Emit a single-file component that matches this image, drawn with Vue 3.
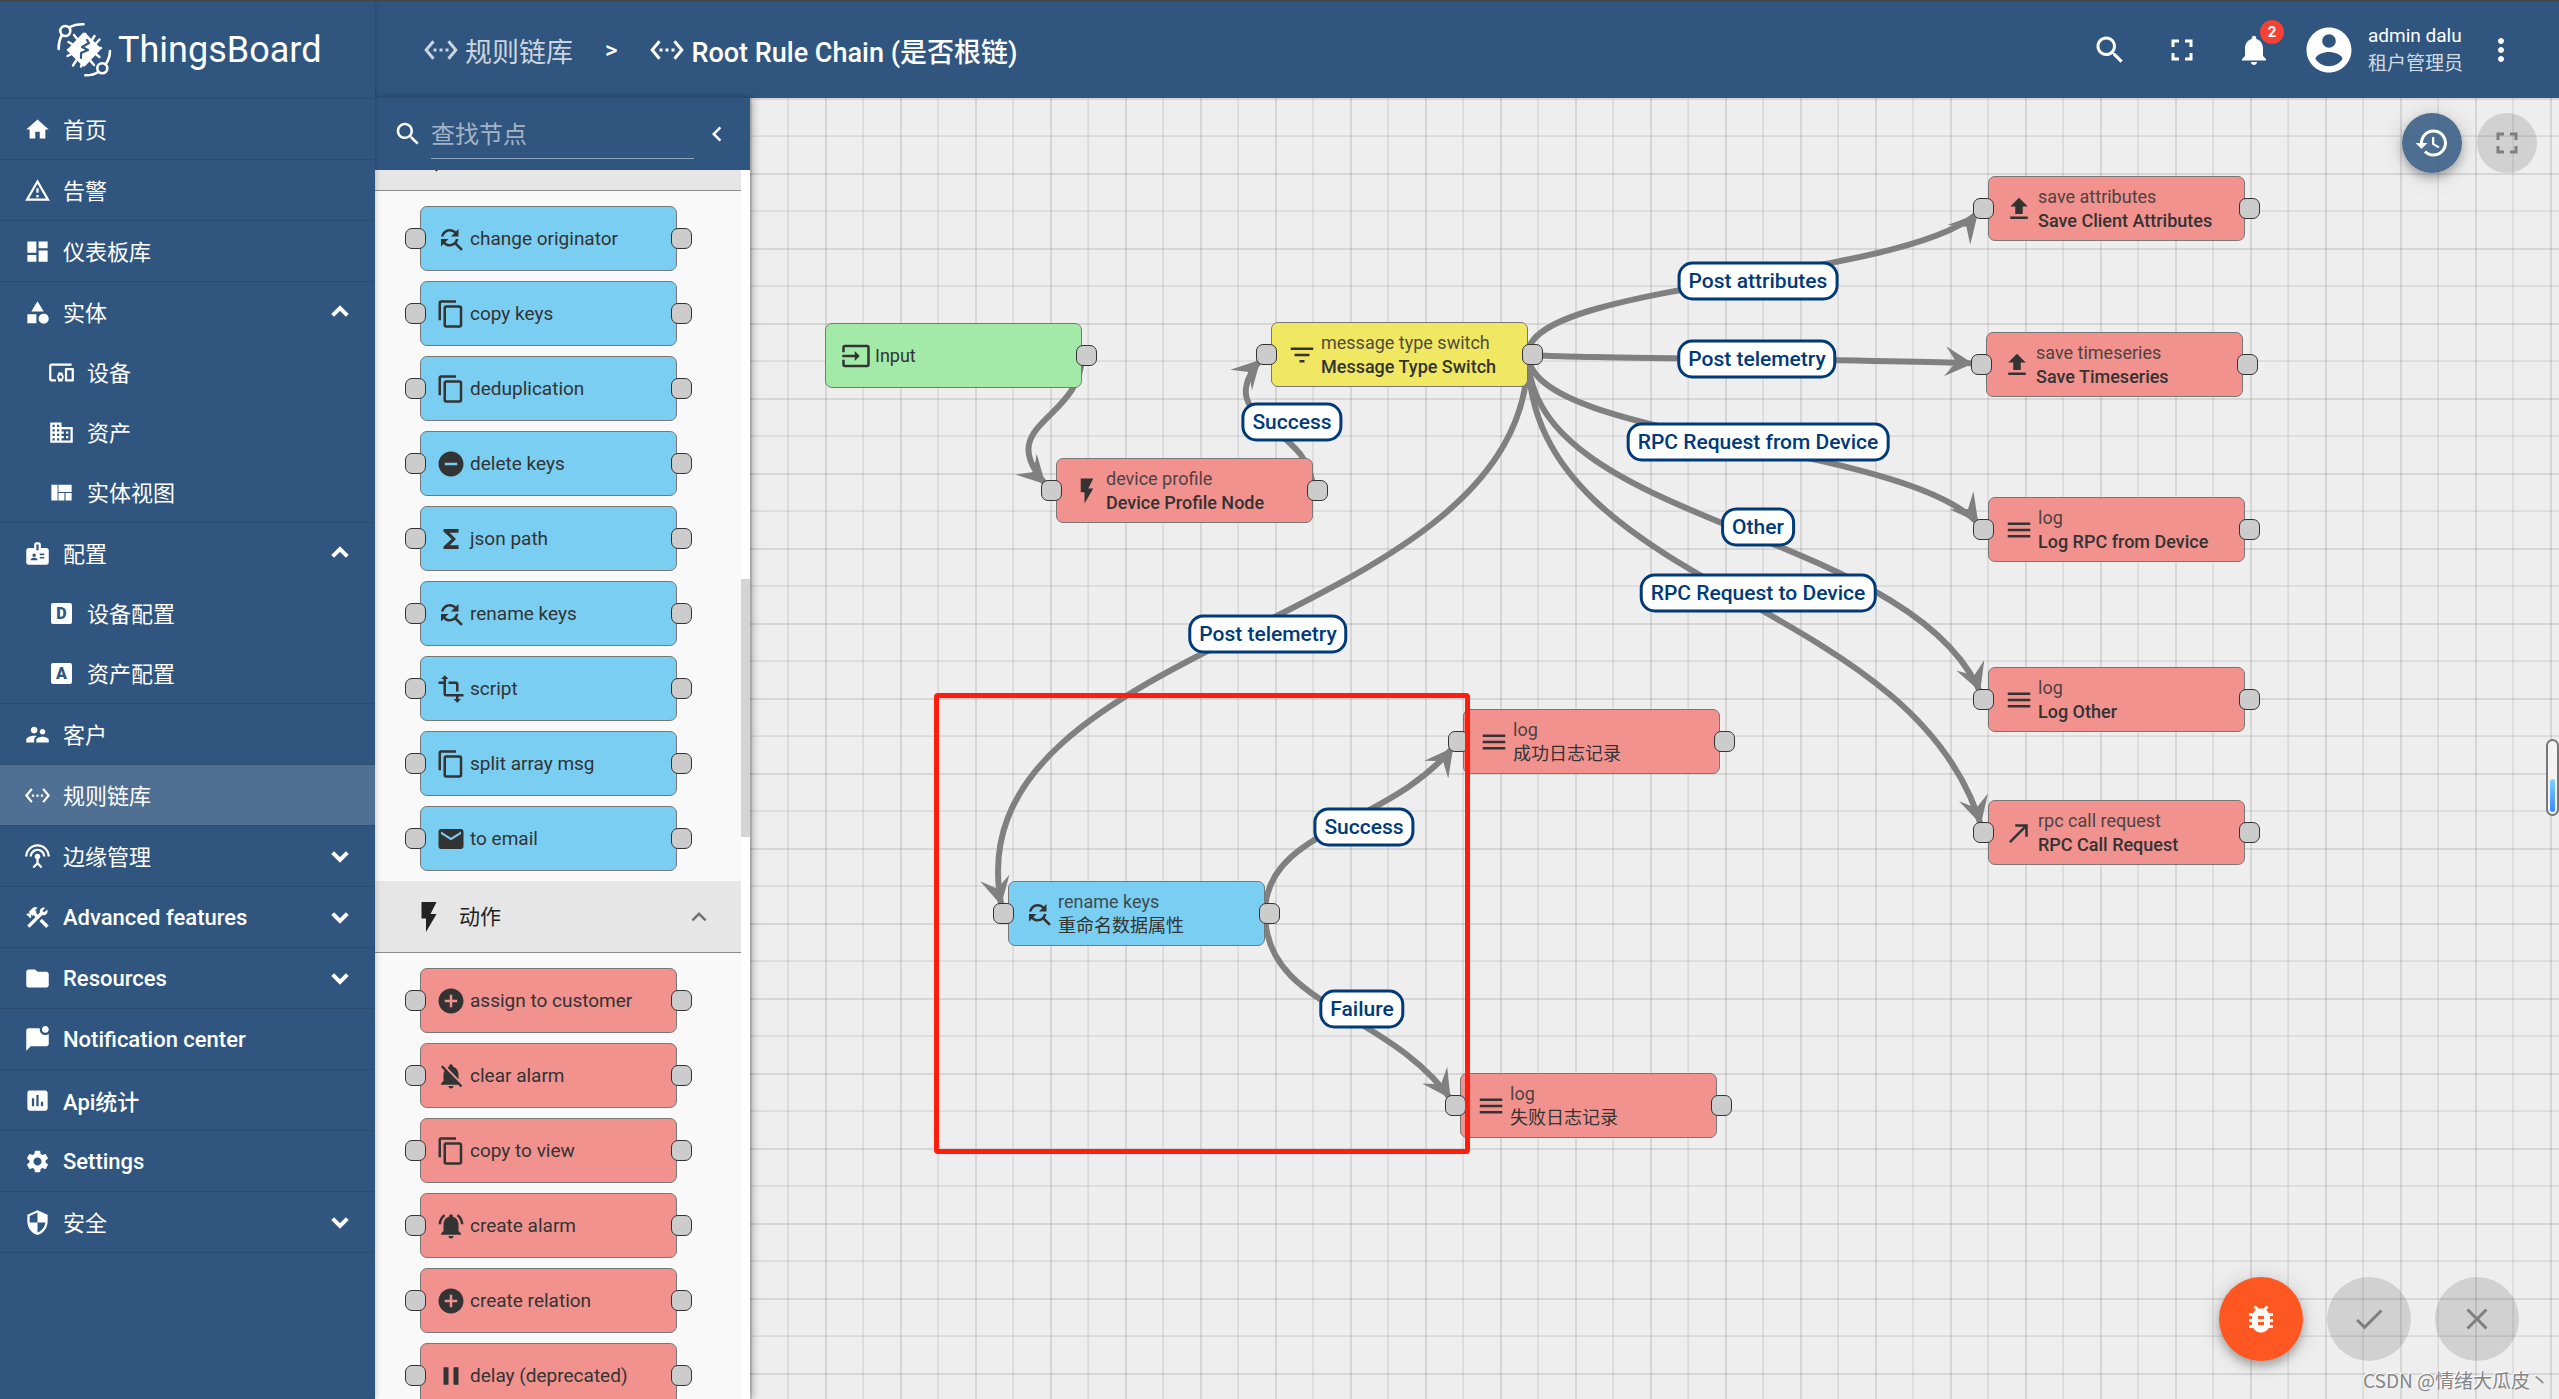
<script setup>
const icons = {
  home: 'M10 20v-6h4v6h5v-8h3L12 3 2 12h3v8z',
  warning: 'M12 5.99L19.53 19H4.47L12 5.99M12 2L1 21h22L12 2zm1 14h-2v2h2v-2zm0-6h-2v4h2v-4z',
  dashboard: 'M3 13h8V3H3v10zm0 8h8v-6H3v6zm10 0h8V11h-8v10zm0-18v6h8V3h-8z',
  category: 'M12 2l-5.5 9h11zM17.5 13a4.5 4.5 0 100 9 4.5 4.5 0 000-9zM3 13.5h8v8H3z',
  devices: 'M3 6h18V4H3c-1.1 0-2 .9-2 2v12c0 1.1.9 2 2 2h4v-2H3V6zm10 6H9v1.78c-.61.55-1 1.33-1 2.22s.39 1.67 1 2.22V20h4v-1.78c.61-.55 1-1.34 1-2.22s-.39-1.67-1-2.22V12zm-2 5.5c-.83 0-1.5-.67-1.5-1.5s.67-1.5 1.5-1.5 1.5.67 1.5 1.5-.67 1.5-1.5 1.5zM22 8h-6c-.5 0-1 .5-1 1v10c0 .5.5 1 1 1h6c.5 0 1-.5 1-1V9c0-.5-.5-1-1-1zm-1 10h-4v-8h4v8z',
  domain: 'M12 7V3H2v18h20V7H12zM6 19H4v-2h2v2zm0-4H4v-2h2v2zm0-4H4V9h2v2zm0-4H4V5h2v2zm4 12H8v-2h2v2zm0-4H8v-2h2v2zm0-4H8V9h2v2zm0-4H8V5h2v2zm10 12h-8v-2h2v-2h-2v-2h2v-2h-2V9h8v10zm-2-8h-2v2h2v-2zm0 4h-2v2h2v-2z',
  quilt: 'M3 5h5.5v14H3zM9.3 5H21v6.5H9.3zM9.3 12.4h5.3V19H9.3zM15.6 12.4H21V19h-5.4z',
  badge: 'M20 7h-5V4c0-1.1-.9-2-2-2h-2c-1.1 0-2 .9-2 2v3H4c-1.1 0-2 .9-2 2v11c0 1.1.9 2 2 2h16c1.1 0 2-.9 2-2V9c0-1.1-.9-2-2-2zM9 12c.83 0 1.5.67 1.5 1.5S9.83 15 9 15s-1.5-.67-1.5-1.5S8.17 12 9 12zm3 6H6v-.75c0-1 2-1.5 3-1.5s3 .5 3 1.5V18zm1-9h-2V4h2v5zm5 7.5h-4V15h4v1.5zm0-3h-4V12h4v1.5z',
  people: 'M16.5 12c1.38 0 2.49-1.12 2.49-2.5S17.88 7 16.5 7C15.12 7 14 8.12 14 9.5s1.12 2.5 2.5 2.5zM9 11c1.66 0 2.99-1.34 2.99-3S10.66 5 9 5C7.34 5 6 6.34 6 8s1.34 3 3 3zm7.5 3c-1.83 0-5.5.92-5.5 2.75V19h11v-2.25c0-1.83-3.67-2.75-5.5-2.75zM9 13c-2.33 0-7 1.17-7 3.5V19h7v-2.25c0-.85.33-2.34 2.37-3.47C10.5 13.1 9.66 13 9 13z',
  chain: 'M7.77 6.76L6.23 5.48.82 12l5.41 6.52 1.54-1.28L3.42 12l4.35-5.24zM7 13h2v-2H7v2zm10-2h-2v2h2v-2zm-6 2h2v-2h-2v2zm6.77-7.52l-1.54 1.28L20.58 12l-4.35 5.24 1.54 1.28L23.18 12l-5.41-6.52z',
  antenna: 'M12 5c-3.87 0-7 3.13-7 7h2c0-2.76 2.24-5 5-5s5 2.24 5 5h2c0-3.87-3.13-7-7-7zm1 9.29c.88-.39 1.5-1.26 1.5-2.29 0-1.38-1.12-2.5-2.5-2.5S9.5 10.62 9.5 12c0 1.02.62 1.9 1.5 2.29v3.3L7.59 21 9 22.41l3-3 3 3L16.41 21 13 17.59v-3.3zM12 1C5.93 1 1 5.93 1 12h2c0-4.97 4.03-9 9-9s9 4.03 9 9h2c0-6.07-4.93-11-11-11z',
  tools: 'M13.78 15.3l6 6 2.11-2.16-6-6-2.11 2.16zM17.5 10c1.93 0 3.5-1.57 3.5-3.5 0-.58-.16-1.12-.41-1.6l-2.7 2.7-1.49-1.49 2.7-2.7c-.48-.25-1.02-.41-1.6-.41C15.57 3 14 4.57 14 6.5c0 .41.08.8.21 1.16l-1.85 1.85-1.78-1.78.71-.71-1.41-1.41L12 3.49c-1.17-1.17-3.07-1.17-4.24 0L4.22 7.03l1.41 1.41H2.81l-.71.71 3.54 3.54.71-.71V9.15l1.41 1.41.71-.71 1.78 1.78-7.41 7.41 2.12 2.12L16.34 9.79c.36.13.75.21 1.16.21z',
  folder: 'M10 4H4c-1.1 0-1.99.9-1.99 2L2 18c0 1.1.9 2 2 2h16c1.1 0 2-.9 2-2V8c0-1.1-.9-2-2-2h-8l-2-2z',
  message: 'M22 7V16C22 17.1 21.1 18 20 18H6L2 22V4C2 2.9 2.9 2 4 2H14.1C14 2.3 14 2.7 14 3C14 5.8 16.2 8 19 8C20.1 8 21.2 7.6 22 7M16 3C16 4.7 17.3 6 19 6S22 4.7 22 3 20.7 0 19 0 16 1.3 16 3Z',
  chart: 'M19 3H5c-1.1 0-2 .9-2 2v14c0 1.1.9 2 2 2h14c1.1 0 2-.9 2-2V5c0-1.1-.9-2-2-2zM9 17H7v-7h2v7zm4 0h-2V7h2v10zm4 0h-2v-4h2v4z',
  settings: 'M19.14 12.94c.04-.3.06-.61.06-.94 0-.32-.02-.64-.07-.94l2.03-1.58c.18-.14.23-.41.12-.61l-1.92-3.32c-.12-.22-.37-.29-.59-.22l-2.39.96c-.5-.38-1.03-.7-1.62-.94l-.36-2.54c-.04-.24-.24-.41-.48-.41h-3.84c-.24 0-.43.17-.47.41l-.36 2.54c-.59.24-1.13.57-1.62.94l-2.39-.96c-.22-.08-.47 0-.59.22L2.74 8.87c-.12.21-.08.47.12.61l2.03 1.58c-.05.3-.09.63-.09.94s.02.64.07.94l-2.03 1.58c-.18.14-.23.41-.12.61l1.92 3.32c.12.22.37.29.59.22l2.39-.96c.5.38 1.03.7 1.62.94l.36 2.54c.05.24.24.41.48.41h3.84c.24 0 .44-.17.47-.41l.36-2.54c.59-.24 1.13-.56 1.62-.94l2.39.96c.22.08.47 0 .59-.22l1.92-3.32c.12-.22.07-.47-.12-.61l-2.01-1.58zM12 15.6c-1.98 0-3.6-1.62-3.6-3.6s1.62-3.6 3.6-3.6 3.6 1.62 3.6 3.6-1.62 3.6-3.6 3.6z',
  security: 'M12 1L3 5v6c0 5.55 3.84 10.74 9 12 5.16-1.26 9-6.45 9-12V5l-9-4zm0 10.99h7c-.53 4.12-3.28 7.79-7 8.94V12H5V6.3l7-3.11v8.8z',
  replace: 'M11 6c1.38 0 2.63.56 3.54 1.46L12 10h6V4l-2.05 2.05C14.68 4.78 12.93 4 11 4c-3.53 0-6.43 2.61-6.92 6H6.1c.46-2.28 2.48-4 4.9-4zm5.64 9.14c.66-.9 1.12-1.97 1.28-3.14H15.9c-.46 2.28-2.48 4-4.9 4-1.38 0-2.63-.56-3.54-1.46L10 12H4v6l2.05-2.05C7.32 17.22 9.07 18 11 18c1.55 0 2.98-.51 4.14-1.36L20 21.49 21.49 20l-4.85-4.86z',
  copy: 'M16 1H4c-1.1 0-2 .9-2 2v14h2V3h12V1zm3 4H8c-1.1 0-2 .9-2 2v14c0 1.1.9 2 2 2h11c1.1 0 2-.9 2-2V7c0-1.1-.9-2-2-2zm0 16H8V7h11v14z',
  remove: 'M12 2C6.48 2 2 6.48 2 12s4.48 10 10 10 10-4.48 10-10S17.52 2 12 2zm5 11H7v-2h10v2z',
  sigma: 'M18 4H6v2l6.5 6L6 18v2h12v-3h-7l5-5-5-5h7z',
  transform: 'M22 18v-2H8V4h2L7 1 4 4h2v2H2v2h4v8c0 1.1.9 2 2 2h8v2h-2l3 3 3-3h-2v-2h4zM10 8h6v6h2V8c0-1.1-.9-2-2-2h-6v2z',
  email: 'M20 4H4c-1.1 0-1.99.9-1.99 2L2 18c0 1.1.9 2 2 2h16c1.1 0 2-.9 2-2V6c0-1.1-.9-2-2-2zm0 4l-8 5-8-5V6l8 5 8-5v2z',
  flash: 'M7 2v11h3v9l7-12h-4l4-8z',
  add: 'M12 2C6.48 2 2 6.48 2 12s4.48 10 10 10 10-4.48 10-10S17.52 2 12 2zm5 11h-4v4h-2v-4H7v-2h4V7h2v4h4v2z',
  bellOff: 'M20 18.69L7.84 6.14 5.27 3.49 4 4.76l2.8 2.8v.01c-.52.99-.8 2.16-.8 3.42v5l-2 2v1h13.73l2 2L21 19.72l-1-1.03zM12 22c1.11 0 2-.89 2-2h-4c0 1.11.89 2 2 2zm6-7.32V11c0-3.08-1.64-5.64-4.5-6.32V4c0-.83-.67-1.5-1.5-1.5s-1.5.67-1.5 1.5v.68c-.15.03-.29.08-.42.12-.1.03-.2.07-.3.11h-.01c-.01 0-.01 0-.02.01-.23.09-.46.2-.68.31 0 0-.01 0-.01.01L18 14.68z',
  bellActive: 'M7.58 4.08L6.15 2.65C3.75 4.48 2.17 7.3 2.03 10.5h2c.15-2.65 1.51-4.97 3.55-6.42zm12.39 6.42h2c-.15-3.2-1.73-6.02-4.12-7.85l-1.42 1.43c2.02 1.45 3.39 3.77 3.54 6.42zM18 11c0-3.07-1.64-5.64-4.5-6.32V4c0-.83-.67-1.5-1.5-1.5s-1.5.67-1.5 1.5v.68C7.63 5.36 6 7.92 6 11v5l-2 2v1h16v-1l-2-2v-5zm-6 11c.14 0 .27-.01.4-.04.65-.14 1.18-.58 1.44-1.18.1-.24.15-.5.15-.78h-4c.01 1.1.9 2 2.01 2z',
  pause: 'M6 19h4V5H6v14zm8-14v14h4V5h-4z',
  input: 'M21 3.01H3c-1.1 0-2 .9-2 2V9h2V4.99h18v14.03H3V15H1v4.01c0 1.1.9 1.98 2 1.98h18c1.1 0 2-.88 2-1.98v-14c0-1.11-.9-2-2-2zM11 16l4-4-4-4v3H1v2h10v3z',
  filter: 'M10 18h4v-2h-4v2zM3 6v2h18V6H3zm3 7h12v-2H6v2z',
  upload: 'M9 16h6v-6h4l-7-7-7 7h4zm-4 2h14v2H5z',
  menu: 'M3 18h18v-2H3v2zm0-5h18v-2H3v2zm0-7v2h18V6H3z',
  callMade: 'M9 5v2h6.59L4 18.59 5.41 20 17 8.41V15h2V5z',
  search: 'M15.5 14h-.79l-.28-.27C15.41 12.59 16 11.11 16 9.5 16 5.91 13.09 3 9.5 3S3 5.91 3 9.5 5.91 16 9.5 16c1.61 0 3.09-.59 4.23-1.57l.27.28v.79l5 4.99L20.49 19l-4.99-5zm-6 0C7.01 14 5 11.99 5 9.5S7.01 5 9.5 5 14 7.01 14 9.5 11.99 14 9.5 14z',
  fullscreen: 'M7 14H5v5h5v-2H7v-3zm-2-4h2V7h3V5H5v5zm12 7h-3v2h5v-5h-2v3zM14 5v2h3v3h2V5h-5z',
  bell: 'M12 22c1.1 0 2-.9 2-2h-4c0 1.1.89 2 2 2zm6-6v-5c0-3.07-1.64-5.64-4.5-6.32V4c0-.83-.67-1.5-1.5-1.5s-1.5.67-1.5 1.5v.68C7.63 5.36 6 7.92 6 11v5l-2 2v1h16v-1l-2-2z',
  account: 'M12 2C6.48 2 2 6.48 2 12s4.48 10 10 10 10-4.48 10-10S17.52 2 12 2zm0 3c1.66 0 3 1.34 3 3s-1.34 3-3 3-3-1.34-3-3 1.34-3 3-3zm0 14.2c-2.5 0-4.71-1.28-6-3.22.03-1.99 4-3.08 6-3.08 1.99 0 5.97 1.09 6 3.08-1.29 1.94-3.5 3.22-6 3.22z',
  more: 'M12 8c1.1 0 2-.9 2-2s-.9-2-2-2-2 .9-2 2 .9 2 2 2zm0 2c-1.1 0-2 .9-2 2s.9 2 2 2 2-.9 2-2-.9-2-2-2zm0 6c-1.1 0-2 .9-2 2s.9 2 2 2 2-.9 2-2-.9-2-2-2z',
  history: 'M13 3c-4.97 0-9 4.03-9 9H1l3.89 3.89.07.14L9 12H6c0-3.87 3.13-7 7-7s7 3.13 7 7-3.13 7-7 7c-1.93 0-3.68-.79-4.94-2.06l-1.42 1.42C8.27 19.99 10.51 21 13 21c4.97 0 9-4.03 9-9s-4.03-9-9-9zm-1 5v5l4.28 2.54.72-1.21-3.5-2.08V8H12z',
  bug: 'M20 8h-2.81c-.45-.78-1.07-1.45-1.82-1.96L17 4.41 15.59 3l-2.17 2.17C12.96 5.06 12.49 5 12 5c-.49 0-.96.06-1.41.17L8.41 3 7 4.41l1.62 1.63C7.88 6.55 7.26 7.22 6.81 8H4v2h2.09c-.05.33-.09.66-.09 1v1H4v2h2v1c0 .34.04.67.09 1H4v2h2.81c1.04 1.79 2.97 3 5.19 3s4.15-1.21 5.19-3H20v-2h-2.09c.05-.33.09-.66.09-1v-1h2v-2h-2v-1c0-.34-.04-.67-.09-1H20V8zm-6 8h-4v-2h4v2zm0-4h-4v-2h4v2z',
  done: 'M9 16.2L4.8 12l-1.4 1.4L9 19 21 7l-1.4-1.4L9 16.2z',
  close: 'M19 6.41L17.59 5 12 10.59 6.41 5 5 6.41 10.59 12 5 17.59 6.41 19 12 13.41 17.59 19 19 17.59 13.41 12z',
  up: 'M12 8l-6 6 1.41 1.41L12 10.83l4.59 4.58L18 14z',
  left: 'M15.41 7.41L14 6l-6 6 6 6 1.41-1.41L10.83 12z',
}

const menu = [
  { label: '首页', icon: 'home' },
  { label: '告警', icon: 'warning' },
  { label: '仪表板库', icon: 'dashboard' },
  {
    label: '实体', icon: 'category', open: true,
    children: [
      { label: '设备', icon: 'devices' },
      { label: '资产', icon: 'domain' },
      { label: '实体视图', icon: 'quilt' },
    ],
  },
  {
    label: '配置', icon: 'badge', open: true,
    children: [
      { label: '设备配置', letter: 'D' },
      { label: '资产配置', letter: 'A' },
    ],
  },
  { label: '客户', icon: 'people' },
  { label: '规则链库', icon: 'chain', active: true },
  { label: '边缘管理', icon: 'antenna', open: false },
  { label: 'Advanced features', icon: 'tools', open: false },
  { label: 'Resources', icon: 'folder', open: false },
  { label: 'Notification center', icon: 'message' },
  { label: 'Api统计', icon: 'chart' },
  { label: 'Settings', icon: 'settings' },
  { label: '安全', icon: 'security', open: false },
]

// Chinese labels are set in the regular weight, Latin ones in medium.
const isChinese = (text) => /^[\u4e00-\u9fff]/.test(text)

const library = [
  {
    icon: 'transform', kind: 'blue',
    items: [
      ['change originator', 'replace'], ['copy keys', 'copy'], ['deduplication', 'copy'],
      ['delete keys', 'remove'], ['json path', 'sigma'], ['rename keys', 'replace'],
      ['script', 'transform'], ['split array msg', 'copy'], ['to email', 'email'],
    ],
  },
  {
    title: '动作', icon: 'flash', kind: 'red',
    items: [
      ['assign to customer', 'add'], ['clear alarm', 'bellOff'], ['copy to view', 'copy'],
      ['create alarm', 'bellActive'], ['create relation', 'add'], ['delay (deprecated)', 'pause'],
    ],
  },
]

// Node positions are canvas coordinates of the top left corner.
const nodes = {
  input: { x: 75, y: 225, kind: 'green', icon: 'input', name: 'Input', source: true },
  profile: { x: 306, y: 360, kind: 'red', icon: 'flash', type: 'device profile', name: 'Device Profile Node' },
  switch: { x: 521, y: 224, kind: 'yellow', icon: 'filter', type: 'message type switch', name: 'Message Type Switch' },
  attributes: { x: 1238, y: 78, kind: 'red', icon: 'upload', type: 'save attributes', name: 'Save Client Attributes' },
  timeseries: { x: 1236, y: 234, kind: 'red', icon: 'upload', type: 'save timeseries', name: 'Save Timeseries' },
  logRpc: { x: 1238, y: 399, kind: 'red', icon: 'menu', type: 'log', name: 'Log RPC from Device' },
  logOther: { x: 1238, y: 569, kind: 'red', icon: 'menu', type: 'log', name: 'Log Other' },
  rpcCall: { x: 1238, y: 702, kind: 'red', icon: 'callMade', type: 'rpc call request', name: 'RPC Call Request' },
  logOk: { x: 713, y: 611, kind: 'red', icon: 'menu', type: 'log', name: '成功日志记录' },
  rename: { x: 258, y: 783, kind: 'blue', icon: 'replace', type: 'rename keys', name: '重命名数据属性' },
  logFail: { x: 710, y: 975, kind: 'red', icon: 'menu', type: 'log', name: '失败日志记录' },
}

const links = [
  ['input', 'profile', ''],
  ['profile', 'switch', 'Success'],
  ['switch', 'attributes', 'Post attributes'],
  ['switch', 'timeseries', 'Post telemetry'],
  ['switch', 'logRpc', 'RPC Request from Device'],
  ['switch', 'logOther', 'Other'],
  ['switch', 'rpcCall', 'RPC Request to Device'],
  ['switch', 'rename', 'Post telemetry'],
  ['rename', 'logOk', 'Success'],
  ['rename', 'logFail', 'Failure'],
]

const edges = links.map(([from, to, label]) => {
  const sx = nodes[from].x + 257
  const sy = nodes[from].y + 32
  const dx = nodes[to].x - 5
  const dy = nodes[to].y + 32
  const x = Math.round((sx + dx) / 2) + 2
  const y = Math.round((sy + dy) / 2)
  return { d: `M${sx} ${sy}C${sx} ${y} ${dx - 65} ${y} ${dx} ${dy}`, label, x, y }
})
</script>

<template>
  <div class="app">
    <aside class="sidebar">
      <a class="brand" href="#">
        <svg class="brand-mark" viewBox="0 0 70 70" fill="none" stroke="#fff" stroke-width="2.6" stroke-linecap="round">
          <circle cx="15.3" cy="16" r="5" />
          <path d="M19 12.500Q25 9.200 33.500 9.300M12 20Q8.500 26 8.700 34" />
          <circle cx="52.300" cy="53.300" r="5" />
          <path d="M55.500 49.500Q60 43 60 36M48.500 57Q43 60.500 35.300 60.300" />
          <path d="M24 20l4 5M18.500 27l5 3M34 23l1.500-4M42 25l2.500-4M45 29.500l4.500-5M17.500 41l5-2.500M23 50.500l3.500-5.500M31 51.500l1.500-4.500M39 44l5 6M44.500 38l5 4M47 33l4 0M18 35l3-1" stroke-width="2.400" />
          <path d="M34 19.500L48.500 34 34 49.500 19.500 35z" fill="#fff" stroke-width="4" stroke-linejoin="round" />
          <path d="M37 25l2 3-7 4 6 3-7 3v5" stroke="#305680" stroke-width="2.200" stroke-linejoin="round" />
        </svg>
        <span>ThingsBoard</span>
      </a>
      <nav>
        <div v-for="item in menu" :key="item.label" class="group">
          <component
            :is="item.open === undefined ? 'a' : 'button'"
            :href="item.open === undefined ? '#' : null"
            class="item"
            :class="{ active: item.active }"
          >
            <svg class="i27" viewBox="0 0 24 24"><path :d="icons[item.icon]" /></svg>
            <span :class="{ cjk: isChinese(item.label) }">{{ item.label }}</span>
            <svg v-if="item.open !== undefined" class="toggle" :class="{ down: !item.open }" viewBox="0 0 24 24">
              <path d="M6.500 14.500L12 9l5.500 5.500" fill="none" stroke="currentColor" stroke-width="3" />
            </svg>
          </component>
          <a v-for="sub in item.children" :key="sub.label" href="#" class="item sub">
            <span v-if="sub.letter" class="letter-cell"><span class="letter">{{ sub.letter }}</span></span>
            <svg v-else class="i27" viewBox="0 0 24 24"><path :d="icons[sub.icon]" /></svg>
            <span class="cjk">{{ sub.label }}</span>
          </a>
        </div>
      </nav>
    </aside>

    <div class="main">
      <header class="topbar">
        <div class="crumbs">
          <a href="#" class="crumb faded">
            <svg class="i36" viewBox="0 0 24 24"><path :d="icons.chain" /></svg>
            <span>规则链库</span>
          </a>
          <span class="sep">&gt;</span>
          <span class="crumb current">
            <svg class="i36" viewBox="0 0 24 24"><path :d="icons.chain" /></svg>
            <span>Root Rule Chain (是否根链)</span>
          </span>
        </div>
        <div class="actions">
          <button class="tool" aria-label="Search"><svg class="i36" viewBox="0 0 24 24"><path :d="icons.search" /></svg></button>
          <button class="tool" aria-label="Fullscreen"><svg class="i36" viewBox="0 0 24 24"><path :d="icons.fullscreen" /></svg></button>
          <button class="tool" aria-label="Notifications">
            <svg class="i36" viewBox="0 0 24 24"><path :d="icons.bell" /></svg>
            <span class="count">2</span>
          </button>
          <svg class="avatar" viewBox="0 0 24 24"><path :d="icons.account" /></svg>
          <div class="user">
            <span>admin dalu</span>
            <span class="role">租户管理员</span>
          </div>
          <button class="tool" aria-label="More"><svg class="i36" viewBox="0 0 24 24"><path :d="icons.more" /></svg></button>
        </div>
      </header>

      <div class="workspace">
        <section class="library">
          <div class="finder">
            <svg class="i30" viewBox="0 0 24 24"><path :d="icons.search" /></svg>
            <input type="text" placeholder="查找节点" aria-label="查找节点" />
            <button class="collapse" aria-label="Collapse"><svg class="i30" viewBox="0 0 24 24"><path :d="icons.left" /></svg></button>
          </div>
          <div class="library-body">
            <div class="library-list">
              <div v-for="group in library" :key="group.kind">
                <button class="group-head">
                  <svg class="i36" viewBox="0 0 24 24"><path :d="icons[group.icon]" /></svg>
                  <span v-if="group.title" class="cjk">{{ group.title }}</span>
                  <svg class="fold" viewBox="0 0 24 24"><path :d="icons.up" /></svg>
                </button>
                <div class="group-body">
                  <div v-for="[name, icon] in group.items" :key="name" class="node" :class="group.kind">
                    <i class="port in"></i>
                    <svg class="i30" viewBox="0 0 24 24"><path :d="icons[icon]" /></svg>
                    <span>{{ name }}</span>
                    <i class="port out"></i>
                  </div>
                </div>
              </div>
            </div>
            <div class="scrollbar"></div>
          </div>
        </section>

        <section class="canvas">
          <svg class="edges">
            <defs>
              <marker id="arrow" viewBox="0 0 28 30" refX="36" refY="15" markerWidth="28" markerHeight="30" markerUnits="userSpaceOnUse" orient="auto">
                <path d="M0 0L28 15 0 30 11 15z" fill="#808080" />
              </marker>
            </defs>
            <path v-for="(edge, i) in edges" :key="i" :d="edge.d" fill="none" stroke="#808080" stroke-width="6" marker-end="url(#arrow)" />
          </svg>
          <div
            v-for="(node, key) in nodes"
            :key="key"
            class="node placed"
            :class="node.kind"
            :style="{ left: node.x + 'px', top: node.y + 'px' }"
          >
            <i v-if="!node.source" class="port in"></i>
            <svg class="i30" viewBox="0 0 24 24"><path :d="icons[node.icon]" /></svg>
            <div class="texts">
              <span v-if="node.type" class="type">{{ node.type }}</span>
              <span :class="{ name: node.type && !isChinese(node.name) }">{{ node.name }}</span>
            </div>
            <i class="port out"></i>
          </div>
          <template v-for="(edge, i) in edges" :key="i">
            <span v-if="edge.label" class="edge-label" :style="{ left: edge.x + 'px', top: edge.y + 'px' }">{{ edge.label }}</span>
          </template>
          <div class="highlight"></div>

          <div class="float-top">
            <button class="round history" aria-label="History"><svg class="i36" viewBox="0 0 24 24"><path :d="icons.history" /></svg></button>
            <button class="round muted" aria-label="Expand"><svg class="i36" viewBox="0 0 24 24"><path :d="icons.fullscreen" /></svg></button>
          </div>
          <div class="float-bottom">
            <button class="fab debug" aria-label="Debug"><svg class="i36" viewBox="0 0 24 24"><path :d="icons.bug" /></svg></button>
            <button class="fab muted" aria-label="Apply"><svg class="i36" viewBox="0 0 24 24"><path :d="icons.done" /></svg></button>
            <button class="fab muted" aria-label="Cancel"><svg class="i36" viewBox="0 0 24 24"><path :d="icons.close" /></svg></button>
          </div>
          <div class="gauge"><div class="level"></div></div>
          <span class="watermark">CSDN @情绪大瓜皮丶</span>
        </section>
      </div>
    </div>
  </div>
</template>

<style>
body {
  margin: 0;
}
</style>

<style scoped>
.app,
.app * {
  box-sizing: border-box;
}
.app {
  display: flex;
  height: 100vh;
  overflow: hidden;
  border-top: 2px solid #474747;
  background: #305680;
  color: #fff;
  font-family: Roboto, "Noto Sans CJK SC", sans-serif;
  font-size: 21px;
}
a {
  color: inherit;
  text-decoration: none;
}
button {
  margin: 0;
  padding: 0;
  border: 0;
  background: none;
  color: inherit;
  font: inherit;
}
svg {
  display: block;
  flex: none;
  fill: currentColor;
}
.i27 { width: 27px; height: 27px; }
.i30 { width: 30px; height: 30px; }
.i36 { width: 36px; height: 36px; }

.sidebar {
  position: relative;
  z-index: 3;
  flex: none;
  width: 375px;
  background: #305680;
  box-shadow: 0 0 6px rgba(0, 0, 0, 0.25);
}
.brand {
  display: flex;
  align-items: center;
  height: 96px;
  padding-left: 50px;
  font-size: 36px;
}
.brand-mark {
  width: 70px;
  height: 70px;
  margin-right: -2px;
  fill: none;
}
.group {
  border-top: 1px solid #2b4d73;
}
.group:last-child {
  border-bottom: 1px solid #2b4d73;
}
.item {
  display: flex;
  align-items: center;
  gap: 12px;
  width: 100%;
  height: 60px;
  padding: 0 19px 0 24px;
  font-size: 22px;
  font-weight: 500;
  text-align: left;
  white-space: nowrap;
}
.item.sub {
  padding-left: 48px;
}
.item.active {
  background: #4f6f93;
}
.cjk {
  padding-bottom: 3px;
  font-weight: 400;
}
.toggle {
  width: 32px;
  height: 32px;
  margin-left: auto;
}
.toggle.down {
  transform: rotate(180deg);
}
.letter-cell {
  display: flex;
  align-items: center;
  justify-content: center;
  width: 27px;
  height: 27px;
}
.letter {
  width: 21px;
  height: 21px;
  border-radius: 2px;
  background: #fff;
  color: #305680;
  font-size: 16px;
  font-weight: 900;
  line-height: 21px;
  text-align: center;
}

.main {
  flex: 1;
  display: flex;
  flex-direction: column;
  min-width: 0;
}
.topbar {
  display: flex;
  flex: none;
  align-items: center;
  justify-content: space-between;
  height: 96px;
  padding: 0 22px 0 48px;
}
.crumbs,
.crumb,
.actions {
  display: flex;
  align-items: center;
}
.crumbs {
  font-size: 27px;
}
.crumb {
  gap: 6px;
}
.current {
  font-weight: 500;
}
.faded {
  color: rgba(255, 255, 255, 0.75);
}
.sep {
  margin: 0 32px;
  font-size: 24px;
  font-weight: 500;
}
.tool {
  position: relative;
  display: flex;
  align-items: center;
  justify-content: center;
  width: 72px;
  height: 72px;
}
.count {
  position: absolute;
  top: 6px;
  right: 6px;
  width: 24px;
  height: 24px;
  border-radius: 50%;
  background: #f44336;
  font-size: 15px;
  font-weight: 700;
  line-height: 24px;
  text-align: center;
}
.avatar {
  width: 54px;
  height: 54px;
  margin: 0 12px;
}
.user {
  display: flex;
  flex-direction: column;
  margin-right: 2px;
  font-size: 19px;
  line-height: 28px;
}
.role {
  color: rgba(255, 255, 255, 0.8);
}

.workspace {
  display: flex;
  flex: 1;
  min-height: 0;
}
.library {
  position: relative;
  z-index: 2;
  display: flex;
  flex: none;
  flex-direction: column;
  width: 375px;
  background: #f9f9f9;
  color: #333;
  box-shadow: 2px 0 8px rgba(0, 0, 0, 0.35);
}
.finder {
  display: flex;
  flex: none;
  align-items: center;
  height: 72px;
  padding: 0 18px;
  background: #305680;
  color: #fff;
}
.finder input {
  flex: 1;
  min-width: 0;
  height: 50px;
  margin: 0 8px;
  padding: 3px 0 0;
  border: 0;
  border-bottom: 1px solid #8fa5bd;
  outline: 0;
  background: none;
  color: #fff;
  font: inherit;
  font-size: 24px;
}
.finder input::placeholder {
  color: #a3b3c6;
  opacity: 1;
}
.library-body {
  display: flex;
  flex: 1;
  min-height: 0;
  overflow: hidden;
}
.library-list {
  flex: 1;
  margin-top: -51px;
}
.group-head {
  display: flex;
  align-items: center;
  gap: 12px;
  width: 100%;
  height: 72px;
  padding: 0 27px 0 36px;
  border-bottom: 1px solid #8c8c8c;
  background: #e6e6e6;
  color: #222;
  text-align: left;
}
.fold {
  width: 30px;
  height: 30px;
  margin-left: auto;
  color: #6f6f6f;
}
.group-body {
  padding: 15px 0 0 45px;
  font-size: 19px;
}
.scrollbar {
  flex: none;
  width: 9px;
  background: linear-gradient(#d4d4d4, #d4d4d4) 0 409px / 9px 258px no-repeat #fff;
}

.node {
  position: relative;
  display: flex;
  align-items: center;
  gap: 4px;
  width: 257px;
  height: 65px;
  margin-bottom: 10px;
  padding-left: 15px;
  border: 1px solid #777;
  border-radius: 7px;
  color: #333;
  line-height: 24px;
  white-space: nowrap;
}
.blue { background: #79cef2; }
.red { background: #f1928f; }
.green { background: #a3eaa9; }
.yellow { background: #f0e763; }
.placed {
  position: absolute;
  margin: 0;
  font-size: 18px;
}
.texts {
  display: flex;
  flex-direction: column;
}
.type {
  opacity: 0.85;
}
.name {
  font-weight: 500;
}
.port {
  position: absolute;
  top: 21px;
  width: 21px;
  height: 21px;
  border: 1px solid #333;
  border-radius: 7px;
  background: #ccc;
}
.in { left: -16px; }
.out { right: -16px; }

.canvas {
  position: relative;
  flex: 1;
  overflow: hidden;
  background-color: #eee;
  background-image:
    linear-gradient(to right, rgba(0, 0, 0, 0.1) 2px, transparent 2px 37px, rgba(0, 0, 0, 0.06) 37px 38px, rgba(0, 0, 0, 0.08) 38px 39px, transparent 39px),
    linear-gradient(to bottom, rgba(0, 0, 0, 0.1) 2px, transparent 2px 37px, rgba(0, 0, 0, 0.06) 37px 38px, rgba(0, 0, 0, 0.08) 38px 39px, transparent 39px);
  background-size: 75px 75px;
}
.edges {
  position: absolute;
  inset: 0;
  width: 100%;
  height: 100%;
}
.edge-label {
  position: absolute;
  height: 39px;
  padding: 0 8px;
  border: 3px solid #003a79;
  border-radius: 15px;
  background: #fff;
  color: #003a79;
  font-weight: 500;
  line-height: 33px;
  white-space: nowrap;
  transform: translate(-50%, -50%);
}
.highlight {
  position: absolute;
  left: 184px;
  top: 595px;
  width: 536px;
  height: 461px;
  border: 5px solid #ff1d0d;
  border-radius: 4px;
}
.float-top,
.float-bottom {
  position: absolute;
  display: flex;
}
.float-top {
  top: 15px;
  right: 22px;
  gap: 15px;
}
.float-bottom {
  right: 40px;
  bottom: 38px;
  gap: 24px;
}
.round,
.fab {
  display: flex;
  align-items: center;
  justify-content: center;
  width: 60px;
  height: 60px;
  border-radius: 50%;
}
.fab {
  width: 84px;
  height: 84px;
}
.history,
.debug {
  background: rgba(48, 86, 128, 0.85);
  box-shadow: 0 5px 8px rgba(0, 0, 0, 0.25), 0 2px 24px rgba(0, 0, 0, 0.14);
}
.debug {
  background: #ff5722;
}
.muted {
  background: rgba(0, 0, 0, 0.12);
  color: #7f7f7f;
}
.gauge {
  position: absolute;
  right: 0;
  top: 641px;
  display: flex;
  align-items: flex-end;
  width: 13px;
  height: 77px;
  padding: 2px;
  border: 2px solid #777;
  border-radius: 7px;
  background: #f3f3f3;
}
.level {
  width: 100%;
  height: 33px;
  border-radius: 3px;
  background: linear-gradient(#7fd0ff, #3a86ff);
}
.watermark {
  position: absolute;
  right: 10px;
  bottom: 4px;
  color: #858585;
  font-family: "Noto Sans CJK SC", sans-serif;
  font-size: 19px;
  line-height: 30px;
  text-shadow: -1px -1px 0 #fff;
}
</style>
